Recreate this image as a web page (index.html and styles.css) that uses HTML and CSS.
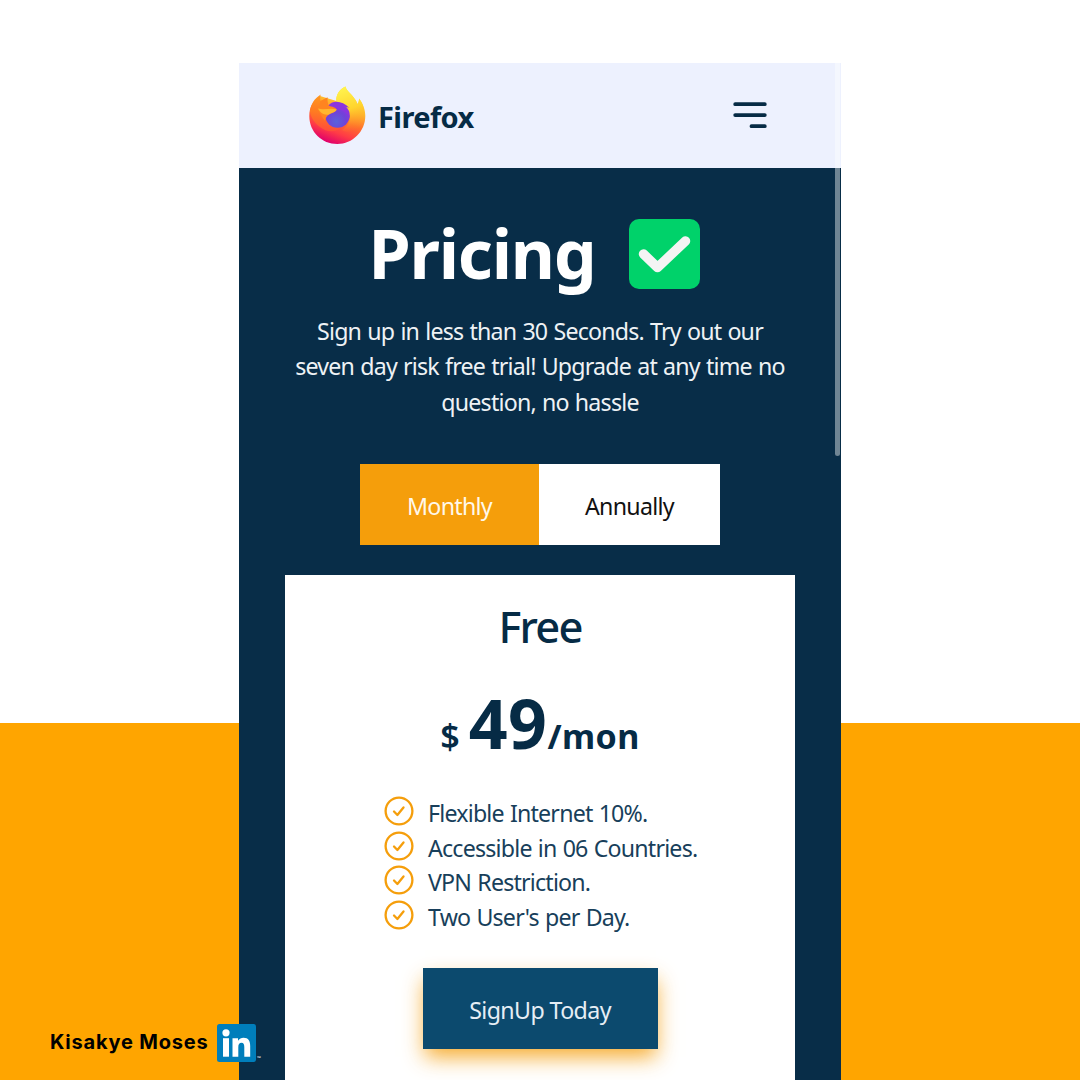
FILE: index.html
```html
<!DOCTYPE html>
<html lang="en">
<head>
<meta charset="utf-8">
<title>Firefox Pricing</title>
<link rel="stylesheet" href="styles.css">
</head>
<body>
<div class="stage">
  <main class="phone">
    <header class="header">
      <div class="brand">
        <svg class="brand-logo" viewBox="0 0 58 60" aria-hidden="true">
          <defs>
            <linearGradient id="flame" x1="0.75" y1="0.1" x2="0.4" y2="1">
              <stop offset="0" stop-color="#ffe83f"/>
              <stop offset="0.3" stop-color="#ffb52c"/>
              <stop offset="0.55" stop-color="#ff6f2c"/>
              <stop offset="0.78" stop-color="#ff3b46"/>
              <stop offset="1" stop-color="#e0006c"/>
            </linearGradient>
            <linearGradient id="tail" x1="0.3" y1="0" x2="0.5" y2="1">
              <stop offset="0" stop-color="#fff44f"/>
              <stop offset="0.5" stop-color="#ffd52e"/>
              <stop offset="1" stop-color="#ff8a22" stop-opacity="0"/>
            </linearGradient>
            <radialGradient id="globe" cx="0.45" cy="0.75" r="0.8">
              <stop offset="0" stop-color="#5a62dc"/>
              <stop offset="0.5" stop-color="#7142d8"/>
              <stop offset="1" stop-color="#9136e8"/>
            </radialGradient>
            <linearGradient id="fox" x1="0.5" y1="0" x2="0.4" y2="1">
              <stop offset="0" stop-color="#ff9a1f"/>
              <stop offset="0.5" stop-color="#ff7a22"/>
              <stop offset="1" stop-color="#ff4a3c"/>
            </linearGradient>
          </defs>
          <path fill="url(#flame)" d="M12 10L28.500 15C28 8 32 3 37.500 0.500C38.500 5 44 8 47.500 14C48.500 15.500 49 17 49.500 18C51 16 51 14 51 12.500C55 17 57.300 24 57.300 30C57.300 45.500 44.500 58 29.300 58C14 58 1.300 46 1.300 30C1.300 21 5 15 12 10Z"/>
          <path fill="url(#tail)" d="M37.500 0.500C38.500 5 44 8 47.500 14C48.500 15.500 49 17 49.500 18C51 16 51 14 51 12.500C58 21 58 34 50 42C45 47 38 47 34 44C42 39 44 31 40 24L28.500 16C27 9 32 3 37.500 0.500Z"/>
          <path fill="url(#fox)" d="M12.700 8.500C12 11 12 13 12.500 15C15 14 17 12.500 19.500 11.500C19 14 19.500 17 20.500 19.500L21 34C22 39 27 42 32 42C27 47 18 46 12 41C7 37 3 33 2 25C3 18 6 13 12.700 8.500Z"/>
          <circle cx="29.500" cy="29.500" r="12.200" fill="url(#globe)"/>
          <path fill="#8b35de" d="M20 20C24 14 34 14 41.500 22C39 21 37 20.500 35.500 20.500C39 23 41.500 27 41.700 32C37 23 28 23 20 20Z"/>
          <path fill="#ff8420" d="M12.500 15C15 14 17 12.500 19.500 11.500C19 14 19.500 17 20.500 19.500C22 20.500 27 20.500 28.700 23.500C28 26 24 26.500 21 28.500C18.500 30 17.500 32 17 35C14 31 12 27 10 24Z"/>
          <path fill="#ffb62f" d="M10 22.500C16 24.500 22 21.500 28.700 23.500C28 26 24 26.500 21 28.500C16 29.500 12 26.500 10 22.500Z"/>
        </svg>
        <span class="brand-name">Firefox</span>
      </div>
      <svg class="menu" viewBox="0 0 34 27" aria-label="Menu">
        <path d="M2.200 2.200H31.800M2.200 13.100H31.800M18.500 24.200H31.800" stroke="#062b45" stroke-width="3.800" stroke-linecap="round"/>
      </svg>
    </header>
    <section class="pricing">
      <div class="title-row">
        <h1 class="title">Pricing</h1>
        <svg class="title-check" viewBox="0 0 71 70" aria-hidden="true">
          <rect width="71" height="70" rx="10" fill="#00d26a"/>
          <path d="M14.500 35L28.500 48.500L56.500 22" fill="none" stroke="#f4f4f4" stroke-width="9.500" stroke-linecap="round" stroke-linejoin="round"/>
        </svg>
      </div>
      <p class="lead"><span>Sign up in less than 30 Seconds. Try out our</span><br><span>seven day risk free trial! Upgrade at any time no</span><br><span>question, no hassle</span></p>
      <div class="toggle">
        <button class="period period-active">Monthly</button>
        <button class="period">Annually</button>
      </div>
      <article class="card">
        <h2 class="plan">Free</h2>
        <div class="price"><span class="currency">$</span><span class="amount">49</span><span class="per">/mon</span></div>
        <ul class="features">
          <li class="feature"><svg class="tick" viewBox="0 0 30 30"><circle cx="15" cy="15" r="13.400"/><path d="M10 15.500L13.400 19L19.500 11.500"/></svg><span>Flexible Internet 10%.</span></li>
          <li class="feature"><svg class="tick" viewBox="0 0 30 30"><circle cx="15" cy="15" r="13.400"/><path d="M10 15.500L13.400 19L19.500 11.500"/></svg><span>Accessible in 06 Countries.</span></li>
          <li class="feature"><svg class="tick" viewBox="0 0 30 30"><circle cx="15" cy="15" r="13.400"/><path d="M10 15.500L13.400 19L19.500 11.500"/></svg><span>VPN Restriction.</span></li>
          <li class="feature"><svg class="tick" viewBox="0 0 30 30"><circle cx="15" cy="15" r="13.400"/><path d="M10 15.500L13.400 19L19.500 11.500"/></svg><span>Two User's per Day.</span></li>
        </ul>
        <button class="signup">SignUp Today</button>
      </article>
    </section>
    <div class="scrollbar"></div>
  </main>
  <div class="author">
    <span class="author-name">Kisakye Moses</span>
    <svg class="linkedin" viewBox="0 0 39 38" aria-label="LinkedIn">
      <rect width="39" height="38" rx="2.500" fill="#007ebb"/>
      <g fill="#fff"><circle cx="9" cy="8.800" r="3.600"/><rect x="6" y="14.200" width="6" height="18.500"/>
      <path d="M15.500 14.200H21V16.800C22.300 14.700 24.300 13.700 26.500 13.700C31.500 13.700 33.200 17 33.200 22V32.700H27.300V23.200C27.300 20.500 26.800 18.700 24.500 18.700C22.200 18.700 21.300 20.400 21.300 23.200V32.700H15.500Z"/></g>
    </svg>
    <span class="tm">™</span>
  </div>
</div>
</body>
</html>
```
FILE: styles.css
```css
* { box-sizing: border-box; }
body { margin: 0; font-family: "Noto Sans", "Open Sans", sans-serif; }
h1, h2, p, ul { margin: 0; padding: 0; }
button { border: 0; padding: 0; font-family: inherit; }
svg { display: block; flex: none; }

.stage {
  position: relative;
  width: 1080px;
  height: 1080px;
  padding-top: 63px;
  overflow: hidden;
  display: flex;
  justify-content: center;
  background: linear-gradient(#fff 723px, #ffa500 723px);
}
.phone {
  position: relative;
  width: 602px;
  height: 1017px;
  overflow: hidden;
  background: #082d48;
  color: #062b45;
}
.header {
  height: 105px;
  padding: 0 74px 0 69px;
  display: flex;
  justify-content: space-between;
  align-items: center;
  background: #edf1fe;
}
.brand { display: flex; align-items: center; gap: 12px; }
.brand-logo { width: 58px; height: 60px; }
.brand-name { font-size: 29px; line-height: 40px; font-weight: 700; letter-spacing: -0.6px; padding-top: 2px; }
.menu { width: 34px; height: 27px; }

.pricing { display: flex; flex-direction: column; align-items: center; }
.title-row { display: flex; align-items: center; gap: 33px; height: 96px; margin-top: 37px; padding-right: 12px; }
.title { font-size: 68px; line-height: 96px; font-weight: 700; color: #fff; letter-spacing: -1.2px; }
.title-check { width: 71px; height: 70px; margin-top: 2px; }
.lead { margin-top: 13px; font-size: 23.2px; line-height: 35.4px; color: #eef2f5; text-align: center; letter-spacing: -0.8px; word-spacing: 0.9px; white-space: nowrap; }

.toggle { display: flex; width: 360px; height: 81px; margin-top: 44px; }
.period { flex: 1; padding-top: 2px; background: #fff; color: #111; font-size: 23.2px; letter-spacing: -0.7px; }
.period-active { flex: 0 0 179px; background: #f59e0b; color: #fff8ea; }

.card {
  width: 510px;
  height: 540px;
  margin-top: 30px;
  display: flex;
  flex-direction: column;
  align-items: center;
  background: #fff;
}
.plan { margin-top: 21px; font-size: 43.5px; line-height: 60px; font-weight: 500; letter-spacing: -1.8px; }
.price { display: flex; align-items: baseline; margin-top: 19px; line-height: 96px; height: 96px; font-weight: 700; }
.currency { font-size: 34px; font-weight: 600; margin-right: 9px; }
.amount { font-size: 68px; letter-spacing: 0.5px; }
.per { font-size: 34px; letter-spacing: 0.4px; }
.features { list-style: none; width: 312px; margin-top: 24px; display: flex; flex-direction: column; }
.feature { display: flex; align-items: center; gap: 14px; height: 34.9px; font-size: 23.2px; letter-spacing: -0.8px; word-spacing: 0.9px; color: #183f5b; white-space: nowrap; }
.tick { width: 30px; height: 30px; margin-bottom: 4px; fill: none; stroke: #f59e0b; stroke-width: 2.3; stroke-linecap: round; stroke-linejoin: round; }
.signup { width: 235px; height: 81px; margin-top: 33px; padding-top: 4px; background: #0c4a6e; color: #e6eef5; font-size: 23.2px; letter-spacing: -0.6px; box-shadow: 0 10px 20px -2px rgba(245, 158, 11, .85); }
.scrollbar { position: absolute; right: 1px; top: 0; width: 5px; height: 393px; border-radius: 0 0 3px 3px; background: rgba(255, 255, 255, .42); }

.author { position: absolute; left: 50px; top: 1024px; height: 38px; display: flex; align-items: center; }
.author-name { width: 167px; font-family: Inter, sans-serif; font-size: 20px; line-height: 28px; padding-bottom: 2px; font-weight: 700; letter-spacing: 0.8px; color: #000; white-space: nowrap; }
.linkedin { width: 39px; height: 38px; }
.tm { align-self: flex-end; font-size: 5px; line-height: 8px; color: #fff; margin-left: 1px; }
```
